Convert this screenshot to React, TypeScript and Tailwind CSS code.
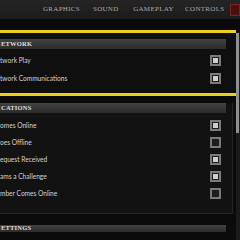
import React from "react";

const tabs = [
  { label: "GRAPHICS", w: "w-[51px]" },
  { label: "SOUND", w: "w-[41px]" },
  { label: "GAMEPLAY", w: "w-[53px]" },
  { label: "CONTROLS", w: "w-[46px]" },
];

const Check = ({ on }: { on: boolean }) => (
  <div className="w-[11px] h-[11px] border-[2px] border-[#7a7a7a] bg-[#1e1e1e] p-[1px]">
    {on && <div className="w-full h-full bg-[#cdcdcd]" />}
  </div>
);

const Header = ({ title }: { title: string }) => (
  <div className="w-[226px] h-[10px] bg-gradient-to-b from-[#424242] to-[#2c2c2c] flex items-center pl-[1px]">
    <span className="text-[6.5px] font-bold text-[#dedede] tracking-[0.2px] leading-none font-['Liberation_Serif',serif]">
      {title}
    </span>
  </div>
);

const Row = ({ label, on, h }: { label: string; on: boolean; h: string }) => (
  <div className={`flex items-center ${h} w-[233px]`}>
    <span className="flex-1 text-[6.6px] leading-none text-[#d2d2d2] font-['Lato',sans-serif] whitespace-nowrap">
      {label}
    </span>
    <div className="w-[23px] flex">
      <Check on={on} />
    </div>
  </div>
);

export default function App() {
  return (
    <div className="relative w-[240px] h-[240px] overflow-hidden bg-[#0b0b0b] flex flex-col">
      <nav className="h-[19px] shrink-0 bg-gradient-to-b from-[#252525] to-[#1b1b1b] flex items-center pl-[43px]">
        {tabs.map((t) => (
          <span
            key={t.label}
            className={`${t.w} text-[7px] text-[#ababab] tracking-[0.3px] leading-none font-['Liberation_Serif',serif]`}
          >
            {t.label}
          </span>
        ))}
        <div className="w-[10px] h-[12px] bg-[#4a1010] border border-[#7a2222]" />
      </nav>
      <div className="h-[11px] shrink-0 bg-[#0a0a0a]" />

      <section className="shrink-0 w-[236px] h-[66px] border-y-[3px] border-[#ecce1b] bg-[#0f0f0f] pt-[6px]">
        <Header title="ETWORK" />
        <div className="h-[2px]" />
        <Row label="twork Play" on h="h-[18px]" />
        <Row label="twork Communications" on h="h-[18px]" />
      </section>

      <div className="h-[7px] shrink-0" />

      <section className="shrink-0 w-[233px] h-[111px] bg-[#121212] border-r border-b border-[#262626]">
        <Header title="CATIONS" />
        <div className="h-[4px]" />
        <Row label="omes Online" on h="h-[17px]" />
        <Row label="oes Offline" on={false} h="h-[17px]" />
        <Row label="equest Received" on h="h-[17px]" />
        <Row label="ams a Challenge" on h="h-[17px]" />
        <Row label="mber Comes Online" on={false} h="h-[17px]" />
      </section>

      <div className="h-[11px] shrink-0 bg-[#0a0a0a]" />
      <Header title="ETTINGS" />
      <div className="flex items-start pt-[8px] w-[233px]">
        <div className="w-[128px]" />
        <div className="w-[94px] h-[10px] border border-[#5a5a5a] bg-[#1a1a1a]" />
      </div>

      <div className="absolute left-[236px] top-[33px] w-[4px] h-[207px] bg-[#1a1a1a]">
        <div className="w-[3px] h-[100px] bg-[#8f8f8f]" />
      </div>
    </div>
  );
}
